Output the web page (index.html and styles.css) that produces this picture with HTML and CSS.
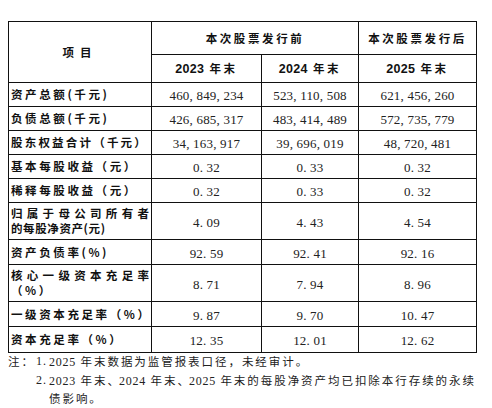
FILE: index.html
```html
<!DOCTYPE html>
<html lang="zh-CN">
<head>
<meta charset="utf-8">
<link rel="stylesheet" href="styles.css">
</head>
<body>
<div class="page">
<table class="fin">
  <colgroup>
    <col class="c1"><col class="c2"><col class="c3"><col class="c4">
  </colgroup>
  <thead>
    <tr class="h1">
      <th rowspan="2" class="item">项目</th>
      <th colspan="2">本次股票发行前</th>
      <th>本次股票发行后</th>
    </tr>
    <tr class="h2">
      <th><span class="yr">2023</span> 年末</th>
      <th><span class="yr">2024</span> 年末</th>
      <th><span class="yr">2025</span> 年末</th>
    </tr>
  </thead>
  <tbody>
    <tr class="r24"><td class="lbl">资产总额(千元)</td><td>460, 849, 234</td><td>523, 110, 508</td><td>621, 456, 260</td></tr>
    <tr class="r24"><td class="lbl">负债总额(千元)</td><td>426, 685, 317</td><td>483, 414, 489</td><td>572, 735, 779</td></tr>
    <tr class="r24"><td class="lbl tight">股东权益合计（千元）</td><td>34, 163, 917</td><td>39, 696, 019</td><td>48, 720, 481</td></tr>
    <tr class="r24"><td class="lbl">基本每股收益（元）</td><td>0. 32</td><td>0. 33</td><td>0. 32</td></tr>
    <tr class="r24"><td class="lbl">稀释每股收益（元）</td><td>0. 32</td><td>0. 33</td><td>0. 32</td></tr>
    <tr class="r37"><td class="lbl"><span class="just">归属于母公司所有者</span><span class="narrow">的每股净资产(元)</span></td><td>4. 09</td><td>4. 43</td><td>4. 54</td></tr>
    <tr class="r25"><td class="lbl">资产负债率(%)</td><td>92. 59</td><td>92. 41</td><td>92. 16</td></tr>
    <tr class="r37"><td class="lbl"><span class="just">核心一级资本充足率</span><span>（%）</span></td><td>8. 71</td><td>7. 94</td><td>8. 96</td></tr>
    <tr class="r25"><td class="lbl">一级资本充足率（%）</td><td>9. 87</td><td>9. 70</td><td>10. 47</td></tr>
    <tr class="r26"><td class="lbl">资本充足率（%）</td><td>12. 35</td><td>12. 01</td><td>12. 62</td></tr>
  </tbody>
</table>
<div class="notes">
  <div class="note-lbl">注：</div>
  <div class="note-list">
    <div class="note"><span class="num">1.</span><span class="txt"><span class="d">2025</span> 年末数据为监管报表口径，未经审计。</span></div>
    <div class="note"><span class="num">2.</span><span class="txt"><span class="nw"><span class="d">2023</span> 年末<span class="dun">、</span><span class="d">2024</span> 年末<span class="dun">、</span><span class="d">2025</span> 年末的每股净资产均已扣除本行存续的永续</span><br>债影响。</span></div>
  </div>
</div>
</div>
</body>
</html>
```

FILE: styles.css
```css
html, body {
  margin: 0;
  padding: 0;
  background: #ffffff;
}
.page {
  padding: 21px 0 0 8px;
}
.fin {
  border-collapse: collapse;
  table-layout: fixed;
  width: 468px;
  color: #111;
}
.c1 { width: 143px; }
.c2 { width: 110px; }
.c3 { width: 97px; }
.c4 { width: 118px; }
.fin th, .fin td {
  border: 1px solid #111;
  padding: 0;
}
.fin th {
  font-family: "Noto Sans CJK SC", sans-serif;
  font-weight: 700;
  font-size: 11.5px;
  letter-spacing: 2.6px;
  text-align: center;
  vertical-align: middle;
  line-height: 14px;
}
.fin th.item {
  letter-spacing: 6px;
}
.yr {
  font-family: "Liberation Sans", sans-serif;
  font-weight: 700;
  font-size: 12.5px;
  letter-spacing: 0.3px;
}
.h1 { height: 33px; }
.h2 { height: 28px; }
.r24 { height: 24px; }
.r25 { height: 25px; }
.r26 { height: 26px; }
.r37 { height: 37px; }
.fin td {
  font-family: "Liberation Serif", serif;
  font-size: 13px;
  color: #222;
  text-align: center;
  vertical-align: middle;
  padding-top: 2px;
  letter-spacing: 0.2px;
  line-height: 15px;
}
.fin td.lbl {
  font-family: "Noto Sans CJK SC", sans-serif;
  font-weight: 700;
  font-size: 11.5px;
  color: #111;
  text-align: left;
  padding: 0 2px 0 2px;
  letter-spacing: 2.6px;
  line-height: 15px;
}
.fin td.lbl.tight {
  letter-spacing: 2.2px;
}
.lbl span { display: block; }
.just {
  text-align: justify;
  text-align-last: justify;
  letter-spacing: 0;
}
.lbl .narrow {
  letter-spacing: 0.6px;
}
.notes {
  display: flex;
  margin-top: 0;
  font-family: "Noto Sans CJK SC", sans-serif;
  font-size: 11.5px;
  color: #222;
  letter-spacing: 1.95px;
  line-height: 17.5px;
}
.note-lbl {
  width: 28px;
  flex: none;
}
.note-list {
  flex: 1;
}
.note {
  display: flex;
}
.num {
  font-family: "Liberation Serif", serif;
  font-size: 12px;
  width: 13px;
  flex: none;
  letter-spacing: 1px;
}
.d {
  font-family: "Liberation Serif", serif;
  font-size: 12px;
  letter-spacing: 0.75px;
}
.dun {
  letter-spacing: -4px;
  margin-right: 4px;
}
.nw {
  white-space: nowrap;
}
```
